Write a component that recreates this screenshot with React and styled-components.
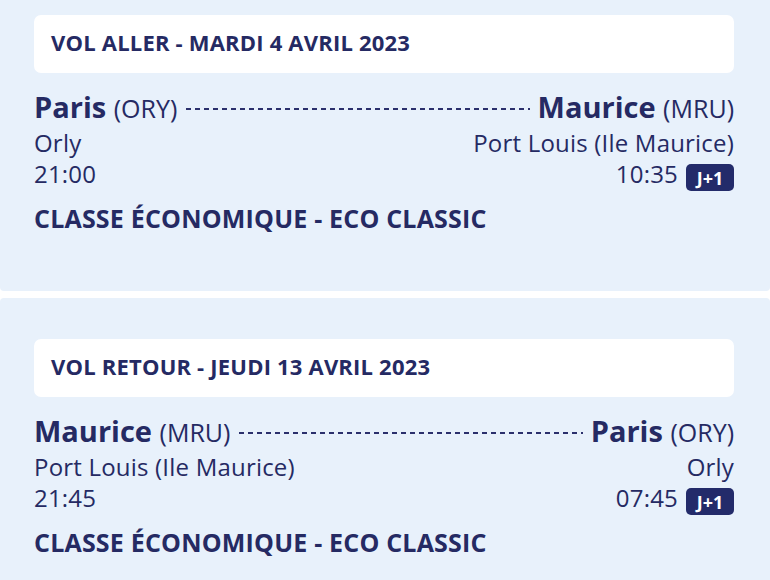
import React from "react";
import styled, { createGlobalStyle } from "styled-components";

const Global = createGlobalStyle`
  html, body { margin: 0; padding: 0; background: #ffffff; }
  body { font-family: "Open Sans", "Lato", sans-serif; color: #252a63; overflow: hidden; }
`;

const Page = styled.div`
  display: flex;
  flex-direction: column;
  gap: 7px;
  margin-top: -26px;
`;

const Panel = styled.section`
  background: #e8f1fb;
  border-radius: 4px;
  padding: 41px 36px 57px 34px;
  display: flex;
  flex-direction: column;
`;

const Header = styled.div`
  background: #ffffff;
  border-radius: 7px;
  height: 58px;
  box-sizing: border-box;
  display: flex;
  align-items: center;
  padding: 0 17px 5px;
  font-weight: 700;
  font-size: 22px;
  letter-spacing: 0.2px;
`;

const Route = styled.div`
  margin-top: 17px;
  display: flex;
  flex-direction: column;
`;

const Line = styled.div`
  display: flex;
  align-items: baseline;
  justify-content: space-between;
  font-size: 24px;
  letter-spacing: 0.2px;
  line-height: ${(p) => p.$lh};
`;

const City = styled.span`
  font-weight: 700;
  font-size: 29px;
  letter-spacing: 0;
  white-space: nowrap;
`;

const Code = styled.span`
  font-weight: 400;
  font-size: 25px;
`;

const Dashes = styled.div`
  flex: 1;
  align-self: center;
  height: 1.6px;
  margin: 3px 8px 0 9px;
  background-image: linear-gradient(to right, #2b306c 55%, transparent 55%);
  background-size: 9px 1.6px;
  background-repeat: repeat-x;
`;

const Time = styled.span`
  display: flex;
  align-items: flex-start;
  gap: 8px;
`;

const Badge = styled.span`
  background: #232b6a;
  color: #ffffff;
  border-radius: 5px;
  width: 48px;
  height: 27px;
  margin-top: 4px;
  display: inline-flex;
  align-items: center;
  justify-content: center;
  font-weight: 700;
  font-size: 18px;
  line-height: 1;
  letter-spacing: 0;
`;

const Cabin = styled.div`
  margin-top: 11px;
  font-weight: 700;
  font-size: 25px;
  line-height: 32px;
  letter-spacing: 0.2px;
`;

const flights = [
  {
    title: "VOL ALLER - MARDI 4 AVRIL 2023",
    from: { city: "Paris", code: "ORY", airport: "Orly", time: "21:00" },
    to: { city: "Maurice", code: "MRU", airport: "Port Louis (Ile Maurice)", time: "10:35", next: true },
  },
  {
    title: "VOL RETOUR - JEUDI 13 AVRIL 2023",
    from: { city: "Maurice", code: "MRU", airport: "Port Louis (Ile Maurice)", time: "21:45" },
    to: { city: "Paris", code: "ORY", airport: "Orly", time: "07:45", next: true },
  },
];

function Flight({ f }) {
  return (
    <Panel>
      <Header>{f.title}</Header>
      <Route>
        <Line $lh="34px">
          <City>
            {f.from.city} <Code>({f.from.code})</Code>
          </City>
          <Dashes />
          <City>
            {f.to.city} <Code>({f.to.code})</Code>
          </City>
        </Line>
        <Line $lh="35px">
          <span>{f.from.airport}</span>
          <span>{f.to.airport}</span>
        </Line>
        <Line $lh="28px">
          <Time>{f.from.time}</Time>
          <Time>
            {f.to.time}
            {f.to.next && <Badge>J+1</Badge>}
          </Time>
        </Line>
      </Route>
      <Cabin>CLASSE ÉCONOMIQUE - ECO CLASSIC</Cabin>
    </Panel>
  );
}

export default function App() {
  return (
    <>
      <Global />
      <Page>
        {flights.map((f) => (
          <Flight key={f.title} f={f} />
        ))}
      </Page>
    </>
  );
}
